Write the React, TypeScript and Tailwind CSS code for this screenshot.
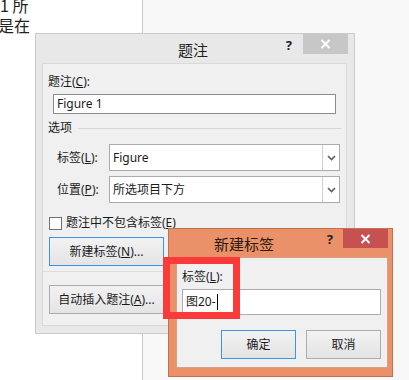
import React from 'react';

const ui = "font-['Noto_Sans','Noto_Sans_CJK_SC',sans-serif]";

const Chevron = () => (
  <svg width="9" height="6" viewBox="0 0 9 6" className="text-[#606060]">
    <path d="M1 1 L4.5 4.5 L8 1" fill="none" stroke="currentColor" strokeWidth="1.6" />
  </svg>
);

const CloseX = () => (
  <svg width="11" height="10" viewBox="0 0 11 10">
    <path d="M1.5 1 L9.5 9 M9.5 1 L1.5 9" stroke="#fff" strokeWidth="2" />
  </svg>
);

const Combo = ({ value }: { value: string }) => (
  <div className="flex h-[27px] w-[231px] shrink-0 border border-[#acacac] bg-white">
    <span className="flex-1 pl-[3px] leading-[25px] text-[12px] text-[#1a1a1a]">{value}</span>
    <div className="flex w-[17px] items-center justify-center border-l border-[#d0d0d0]">
      <Chevron />
    </div>
  </div>
);

const Btn = ({ children, focus, w }: { children: React.ReactNode; focus?: boolean; w: string }) => (
  <div
    className={`flex h-[29px] ${w} items-center justify-center border bg-gradient-to-b from-[#f2f2f2] to-[#e4e4e4] text-[12px] text-[#1a1a1a] ${
      focus ? 'border-[#3c94e6]' : 'border-[#acacac]'
    }`}
  >
    {children}
  </div>
);

export default function App() {
  return (
    <div className={`relative h-[380px] w-[409px] overflow-hidden bg-white ${ui}`}>
      {/* document background */}
      <div className="flex h-full">
        <div className="w-[142px] overflow-hidden bg-white font-['Noto_Sans_CJK_SC',sans-serif] text-[16px] text-[#222]">
          <div className="-mt-[5px] h-[20px] leading-[20px]">1 所</div>
          <div className="-ml-[2px] h-[20px] leading-[20px]">是在</div>
        </div>
        <div className="w-px bg-[#c9c9c9]" />
        <div className="flex-1 bg-[#f8f8f8]" />
      </div>

      {/* 题注 dialog */}
      <div className="absolute left-[35px] top-[33px] flex h-[301px] w-[320px] flex-col border border-[#cbcbcb] bg-[#e8e8e8]">
        <div className="flex h-[29px]">
          <span className="ml-[142px] mt-[6px] text-[15px] leading-[20px] text-[#1e1e1e]">题注</span>
          <span className="ml-auto mr-[11px] mt-[2px] text-[13px] font-bold text-[#222]">?</span>
          <div className="mr-[6px] flex h-[20px] w-[45px] items-center justify-center bg-[#c7c7c7]">
            <CloseX />
          </div>
        </div>
        <div className="ml-[6px] mr-[7px] flex h-[263px] flex-col border border-[#d9d9d9] bg-[#f0f0f0] pl-[5px] text-[12px] text-[#1a1a1a]">
          <div className="mt-[10px] leading-[16px]">
            题注(<u>C</u>):
          </div>
          <div className="ml-[5px] mt-[4px] h-[20px] w-[283px] border border-[#878b92] bg-white pl-[3px] leading-[18px]">
            Figure 1
          </div>
          <div className="mt-[6px] flex items-center leading-[16px]">
            <span>选项</span>
            <div className="ml-[6px] mr-[5px] h-px flex-1 bg-[#d6d6d6]" />
          </div>
          <div className="mt-[8px] flex items-center">
            <span className="ml-[9px] w-[52px] shrink-0">
              标签(<u>L</u>):
            </span>
            <Combo value="Figure" />
          </div>
          <div className="mt-[5px] flex items-center">
            <span className="ml-[9px] w-[52px] shrink-0">
              位置(<u>P</u>):
            </span>
            <Combo value="所选项目下方" />
          </div>
          <div className="ml-[1px] mt-[13px] flex items-center">
            <div className="h-[13px] w-[13px] border border-[#707070] bg-white" />
            <span className="ml-[4px] leading-[14px]">
              题注中不包含标签(<u>E</u>)
            </span>
          </div>
          <div className="ml-[1px] mt-[7px]">
            <Btn focus w="w-[115px]">
              新建标签(<u>N</u>)...
            </Btn>
          </div>
          <div className="-ml-[5px] mt-[5px] h-px w-[125px] bg-[#dcdcdc]" />
          <div className="ml-[1px] mt-[13px]">
            <Btn w="w-[115px]">
              自动插入题注(<u>A</u>)...
            </Btn>
          </div>
        </div>
      </div>

      {/* 新建标签 dialog */}
      <div className="absolute left-[168px] top-[228px] flex h-[149px] w-[225px] flex-col border border-[#c0714d] bg-[#ea9169]">
        <div className="flex h-[28px]">
          <span className="ml-[45px] mt-[5px] text-[15px] leading-[20px] text-[#2a1a12]">新建标签</span>
          <span className="ml-auto mr-[10px] mt-[1px] text-[13px] font-bold text-[#222]">?</span>
          <div className="mr-[4px] flex h-[19px] w-[45px] items-center justify-center bg-[#c75050]">
            <CloseX />
          </div>
        </div>
        <div className="ml-[7px] mr-[4px] flex h-[111px] flex-col border border-[#d6a088] bg-[#f0f0f0] pl-[5px] text-[12px] text-[#1a1a1a]">
          <div className="mt-[11px] leading-[16px]">
            标签(<u>L</u>):
          </div>
          <div className="mt-[4px] flex h-[26px] w-[199px] items-center border border-[#acacac] bg-white pl-[3px]">
            <span>图20-</span>
            <span className="ml-px h-[16px] w-px bg-black" />
          </div>
          <div className="mt-[15px] flex gap-[10px] pl-[39px]">
            <Btn focus w="w-[75px]">
              确定
            </Btn>
            <Btn w="w-[75px]">取消</Btn>
          </div>
        </div>
      </div>

      {/* red highlight box */}
      <div className="absolute left-[163px] top-[257px] h-[62px] w-[77px] border-[7px] border-[#fc3a3a]" />
    </div>
  );
}
